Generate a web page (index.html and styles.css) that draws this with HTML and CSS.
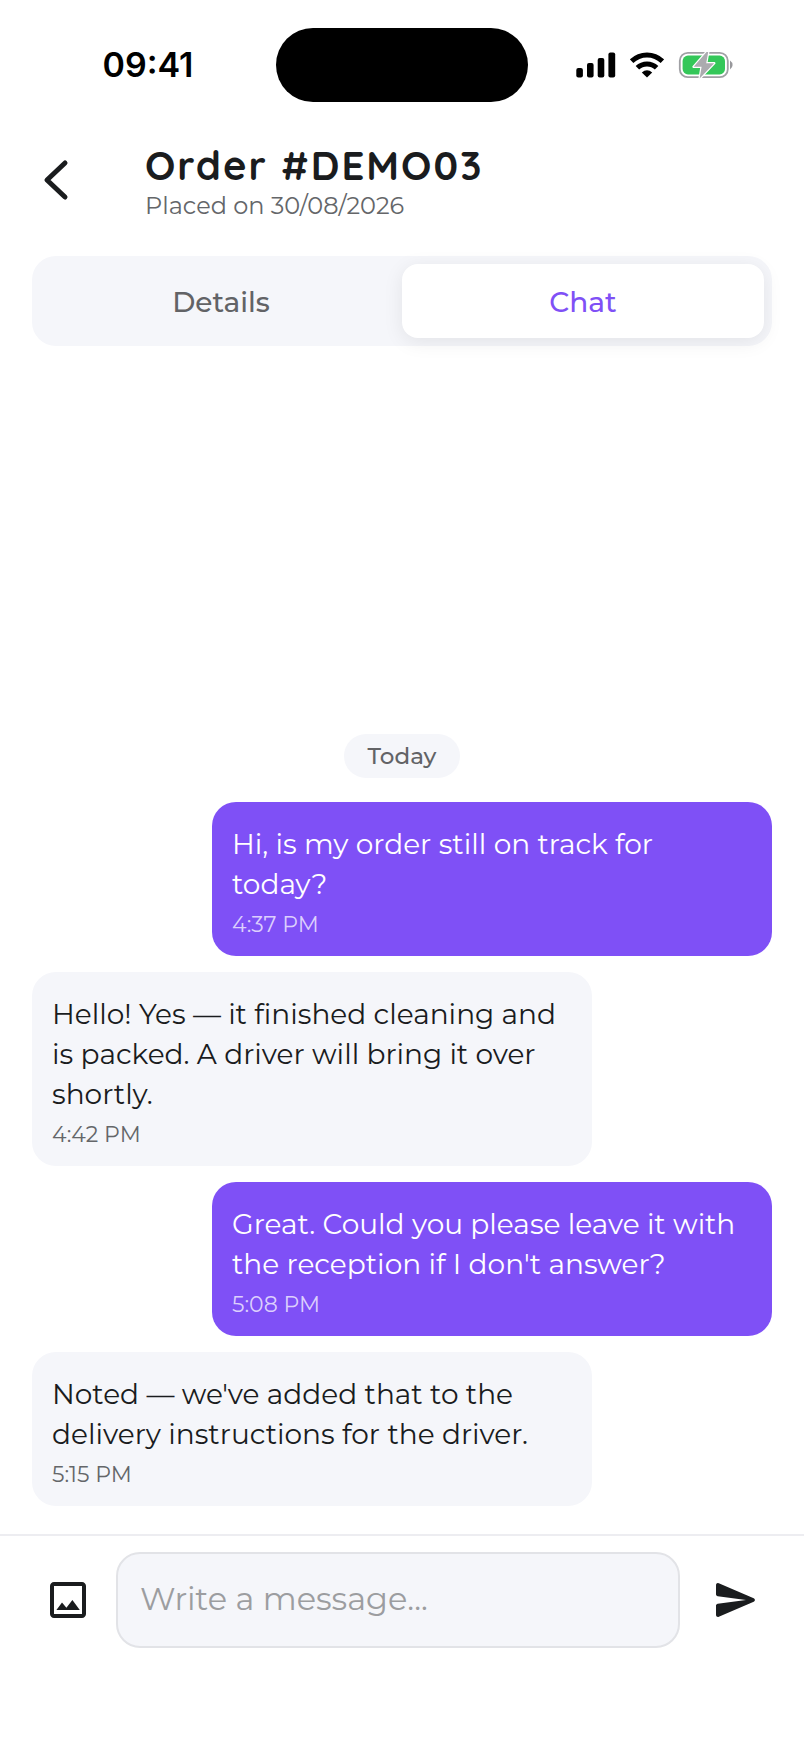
FILE: index.html
```html
<!DOCTYPE html>
<html lang="en">
<head>
<meta charset="utf-8">
<meta name="viewport" content="width=device-width, initial-scale=1">
<title>Order #DEMO03</title>
<link rel="stylesheet" href="styles.css">
</head>
<body>
<div class="status-bar">
  <time class="clock">09:41</time>
  <div class="island"></div>
  <div class="indicators">
    <svg class="signal" viewBox="0 0 40 26" aria-hidden="true"><rect x="0.3" y="16" width="6.6" height="9.5" rx="2"/><rect x="11" y="11" width="6.6" height="14.5" rx="2"/><rect x="21.7" y="6" width="6.6" height="19.5" rx="2"/><rect x="32.4" y="0.5" width="6.8" height="25" rx="2"/></svg>
    <svg class="wifi" viewBox="0 0 34 26" aria-hidden="true"><g fill="none" stroke="#000" stroke-width="5"><path d="M1.600 9.200A22 22 0 0 1 32.400 9.200"/><path d="M7.400 15.800A13.800 13.800 0 0 1 26.600 15.800"/></g><path d="M17 25.600L11.800 20.400Q17 16 22.200 20.400Z"/></svg>
    <svg class="battery" viewBox="0 0 56 28" aria-hidden="true"><rect x="1.800" y="1.800" width="48" height="24.400" rx="8" fill="none" stroke="#a0a0a4" stroke-width="1.800"/><rect x="4.600" y="4.600" width="42.400" height="18.800" rx="5.400" fill="#34c759"/><path d="M52 9.500Q54.600 11.400 54.600 14T52 18.500Z" fill="#98989c"/><path d="M28.500 1L15.600 15.800H23.600L21.600 27.600L36.200 12.200H28.200L30.200 1Z" fill="#ababaf" stroke="#fff" stroke-width="2.400" stroke-linejoin="round" paint-order="stroke"/></svg>
  </div>
</div>
<header class="header">
  <button class="back" type="button" aria-label="Back"><svg viewBox="0 0 28 44" aria-hidden="true"><path d="M23 5L5 22L23 39"/></svg></button>
  <div>
    <h1 class="title">Order #DEMO03</h1>
    <p class="placed">Placed on 30/08/2026</p>
  </div>
</header>
<nav class="tabs" role="tablist">
  <button class="tab" type="button" role="tab" aria-selected="false">Details</button>
  <button class="tab tab-active" type="button" role="tab" aria-selected="true">Chat</button>
</nav>
<main class="chat">
  <p class="day">Today</p>
  <article class="bubble sent"><p class="text">Hi, is my order still on track for today?</p><time class="stamp">4:37 PM</time></article>
  <article class="bubble received"><p class="text">Hello! Yes — it finished cleaning and is packed. A driver will bring it over shortly.</p><time class="stamp">4:42 PM</time></article>
  <article class="bubble sent"><p class="text">Great. Could you please leave it with the reception if I don't answer?</p><time class="stamp">5:08 PM</time></article>
  <article class="bubble received"><p class="text">Noted — we've added that to the delivery instructions for the driver.</p><time class="stamp">5:15 PM</time></article>
</main>
<form class="composer">
  <button class="action" type="button" aria-label="Attach image"><svg viewBox="0 0 24 24" aria-hidden="true"><path d="M19 5v14H5V5h14m0-2H5c-1.100 0-2 .9-2 2v14c0 1.100.9 2 2 2h14c1.100 0 2-.9 2-2V5c0-1.100-.9-2-2-2z"/><path d="M6.200 17L9 13.200L11.200 15.900L14.200 12L17.900 17Z"/></svg></button>
  <input class="message" type="text" aria-label="Message" placeholder="Write a message...">
  <button class="action send" type="submit" aria-label="Send"><svg viewBox="0 0 24 24" aria-hidden="true"><path d="M3.400 20.400l17.450-7.480a1 1 0 0 0 0-1.840L3.400 3.600a.99.99 0 0 0-1.390.91L2 9.120c0 .5.370.93.870.990L17 12 2.870 13.880c-.5.070-.87.500-.87 1l.01 4.610c0 .71.730 1.200 1.390.91z"/></svg></button>
</form>
</body>
</html>
```
FILE: styles.css
```css
* { box-sizing: border-box; }
body {
  margin: 0;
  min-height: 100vh;
  display: flex;
  flex-direction: column;
  background: #fff;
  color: #1a1c1e;
  font-family: Montserrat, Inter, "Noto Sans", sans-serif;
  font-weight: 400;
}
h1, p { margin: 0; }
button, input { font: inherit; color: inherit; border: 0; padding: 0; background: none; }
svg { display: block; }

.status-bar {
  display: grid;
  grid-template-columns: 1fr auto 1fr;
  align-items: center;
  padding: 28px 0 0;
}
.clock { justify-self: center; padding-left: 20px; color: #000; font-family: Inter, sans-serif; font-size: 34px; font-weight: 600; line-height: 40px; }
.island { width: 252px; height: 74px; border-radius: 37px; background: #000; }
.indicators { display: flex; align-items: center; justify-content: center; gap: 14px; padding-right: 22px; }
.signal { width: 40px; height: 26px; }
.wifi { width: 34px; height: 26px; }
.battery { width: 56px; height: 28px; }

.header { display: flex; align-items: flex-start; gap: 75px; padding: 40px 32px 32px 40px; }
.back { width: 30px; height: 44px; margin-top: 16px; }
.back svg { width: 28px; height: 44px; fill: none; stroke: #1a1c1e; stroke-width: 5; stroke-linecap: round; stroke-linejoin: round; margin-left: 2px; }
.title { font-family: Quicksand, Inter, sans-serif; font-size: 40px; font-weight: 700; line-height: 46px; letter-spacing: 2px; }
.placed { font-size: 24px; line-height: 36px; color: #646669; }

.tabs { display: grid; grid-template-columns: 1fr 1fr; margin: 0 32px; padding: 8px; border-radius: 24px; background: #f5f6fa; }
.tab { height: 74px; padding-top: 2px; border-radius: 16px; font-size: 28px; font-weight: 500; color: #626366; }
.tab-active { background: #fff; color: #7f50f6; box-shadow: 0 4px 20px rgba(0, 0, 0, 0.08); }

.chat { flex: 1; display: flex; flex-direction: column; justify-content: flex-end; gap: 16px; padding: 32px 32px 28px; }
.day { align-self: center; margin-bottom: 8px; padding: 6px 24px; border-radius: 22px; background: #f5f6fa; color: #626366; font-size: 23px; font-weight: 500; line-height: 32px; }
.bubble { width: 560px; max-width: 90%; padding: 22px 20px 16px; border-radius: 24px; }
.text { font-size: 28px; line-height: 40px; }
.stamp { display: block; margin-top: 6px; font-size: 22px; line-height: 30px; }
.sent { align-self: flex-end; background: #7f50f6; color: #fff; }
.sent .stamp { color: #dccffd; }
.received { align-self: flex-start; background: #f5f6fa; }
.received .stamp { color: #646669; }

.composer { display: flex; align-items: center; gap: 12px; padding: 16px 32px 100px; border-top: 2px solid #ededf1; }
.action { flex: none; width: 72px; height: 72px; display: grid; place-items: center; }
.action svg { width: 48px; height: 48px; fill: #1a1c1e; }
.send { margin-left: 8px; }
.message { flex: 1; min-width: 0; height: 96px; padding: 0 22px 4px; border: 2px solid #e2e3e7; border-radius: 24px; background: #f5f6fa; font-size: 32px; }
.message::placeholder { color: #9c9da0; opacity: 1; }
```
